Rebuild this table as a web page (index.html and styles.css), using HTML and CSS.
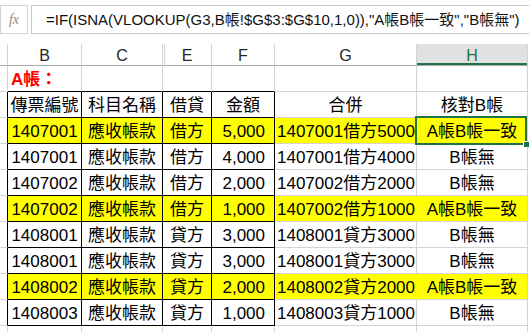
FILE: index.html
```html
<!DOCTYPE html>
<html lang="zh-Hant">
<head>
<meta charset="utf-8">
<title>Sheet</title>
<link rel="stylesheet" href="styles.css">
</head>
<body>
<div class="fbar">
  <div class="fx">fx</div>
  <div class="formula">=IF(ISNA(VLOOKUP(G3,B帳!$G$3:$G$10,1,0)),"A帳B帳一致","B帳無")</div>
</div>
<div class="sheet">
  <div class="c hd"></div>
  <div class="c hd">B</div>
  <div class="c hd">C</div>
  <div class="c hd hid">E</div>
  <div class="c hd">F</div>
  <div class="c hd">G</div>
  <div class="c hd hsel">H</div>

  <div class="c"></div>
  <div class="c tt red">A帳：</div>
  <div class="c tt"></div>
  <div class="c tt"></div>
  <div class="c tt"></div>
  <div class="c"></div>
  <div class="c"></div>

  <div class="c gb"></div>
  <div class="c t">傳票編號</div>
  <div class="c t">科目名稱</div>
  <div class="c t">借貸</div>
  <div class="c t">金額</div>
  <div class="c">合併</div>
  <div class="c">核對B帳</div>

  <div class="c gb"></div>
  <div class="c t y">1407001</div>
  <div class="c t y">應收帳款</div>
  <div class="c t y">借方</div>
  <div class="c t y num">5,000</div>
  <div class="c y gy lft">1407001借方5000</div>
  <div class="c y selcell">A帳B帳一致<span class="selbox"></span><span class="handle"></span></div>

  <div class="c gb"></div>
  <div class="c t">1407001</div>
  <div class="c t">應收帳款</div>
  <div class="c t">借方</div>
  <div class="c t num">4,000</div>
  <div class="c lft">1407001借方4000</div>
  <div class="c">B帳無</div>

  <div class="c gb"></div>
  <div class="c t">1407002</div>
  <div class="c t">應收帳款</div>
  <div class="c t">借方</div>
  <div class="c t num">2,000</div>
  <div class="c lft">1407002借方2000</div>
  <div class="c">B帳無</div>

  <div class="c gb"></div>
  <div class="c t y">1407002</div>
  <div class="c t y">應收帳款</div>
  <div class="c t y">借方</div>
  <div class="c t y num">1,000</div>
  <div class="c y gy lft">1407002借方1000</div>
  <div class="c y">A帳B帳一致</div>

  <div class="c gb"></div>
  <div class="c t">1408001</div>
  <div class="c t">應收帳款</div>
  <div class="c t">貸方</div>
  <div class="c t num">3,000</div>
  <div class="c lft">1408001貸方3000</div>
  <div class="c">B帳無</div>

  <div class="c gb"></div>
  <div class="c t">1408001</div>
  <div class="c t">應收帳款</div>
  <div class="c t">貸方</div>
  <div class="c t num">3,000</div>
  <div class="c lft">1408001貸方3000</div>
  <div class="c">B帳無</div>

  <div class="c gb"></div>
  <div class="c t y">1408002</div>
  <div class="c t y">應收帳款</div>
  <div class="c t y">貸方</div>
  <div class="c t y num">2,000</div>
  <div class="c y gy lft">1408002貸方2000</div>
  <div class="c y">A帳B帳一致</div>

  <div class="c gb"></div>
  <div class="c t">1408003</div>
  <div class="c t">應收帳款</div>
  <div class="c t">貸方</div>
  <div class="c t num">1,000</div>
  <div class="c lft">1408003貸方1000</div>
  <div class="c">B帳無</div>

  <div class="c"></div>
  <div class="c"></div>
  <div class="c"></div>
  <div class="c"></div>
  <div class="c"></div>
  <div class="c"></div>
  <div class="c"></div>
</div>
</body>
</html>
```
FILE: styles.css
```css
html, body {
  margin: 0;
  padding: 0;
  background: #fff;
}
body {
  width: 529px;
  height: 332px;
  overflow: hidden;
  font-family: "Liberation Sans", "Noto Sans CJK TC", sans-serif;
  color: #000;
}
.fbar {
  height: 44px;
  box-sizing: border-box;
  padding-top: 5px;
  display: flex;
  align-items: flex-start;
  gap: 3px;
}
.fx {
  width: 28px;
  height: 29px;
  box-sizing: border-box;
  border: 1px solid #d4d4d4;
  font-family: "Liberation Serif", serif;
  font-style: italic;
  font-size: 14px;
  color: #8a8a8a;
  display: flex;
  align-items: center;
  justify-content: center;
}
.formula {
  flex: 1;
  height: 29px;
  box-sizing: border-box;
  border: 1px solid #c8c8c8;
  border-right: none;
  padding-left: 14px;
  font-size: 15px;
  line-height: 27px;
  white-space: nowrap;
  overflow: hidden;
  color: #111;
}
.sheet {
  display: grid;
  grid-template-columns: 8px 74px 81px 49px 63px 142px 111px;
  grid-template-rows: 22px repeat(10, 26px) 10px;
}
.c {
  box-sizing: border-box;
  border-right: 1px solid #d4d4d4;
  border-bottom: 1px solid #d4d4d4;
  display: flex;
  align-items: flex-end;
  justify-content: center;
  font-size: 17px;
  line-height: 20px;
  padding: 0 1px 1px;
  white-space: nowrap;
}
.hd {
  font-size: 16px;
  color: #262626;
  border-bottom-color: #ababab;
  align-items: center;
  padding: 2px 0 0;
}
.hid {
  background: linear-gradient(to right, transparent 1px, #d4d4d4 1px, #d4d4d4 2px, transparent 2px);
}
.hsel {
  background-color: #e1e1e1;
  color: #217346;
  box-shadow: inset 0 -2px 0 #217346;
}
.t {
  border-right-color: #000;
  border-bottom-color: #000;
}
.tt {
  border-bottom-color: #000;
}
.gb {
  border-right-color: #000;
}
.y {
  background: #ffff00;
}
.gy {
  border-right-color: #ffff00;
}
.num {
  justify-content: flex-end;
  padding-right: 9px;
}
.lft {
  justify-content: flex-start;
  padding-left: 2px;
}
.red {
  color: #ff0000;
  font-weight: bold;
  justify-content: flex-start;
  padding-left: 3px;
}
.selcell {
  position: relative;
}
.selbox {
  position: absolute;
  left: -2px;
  top: -2px;
  width: 112px;
  height: 29px;
  box-sizing: border-box;
  border: 2px solid #217346;
}
.handle {
  position: absolute;
  left: 106px;
  top: 23px;
  width: 7px;
  height: 7px;
  box-sizing: border-box;
  background: #217346;
  border: 1px solid #fff;
}
```
